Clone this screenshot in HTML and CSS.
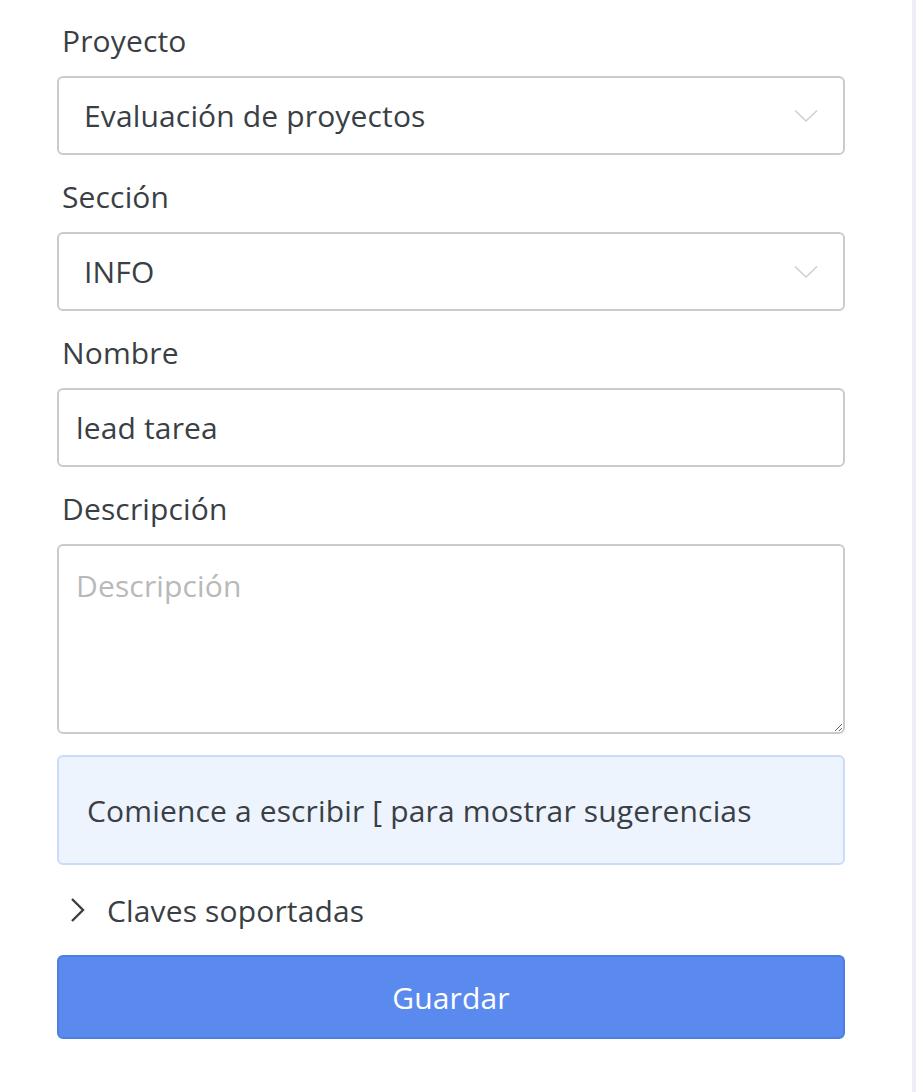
FILE: index.html
```html
<!DOCTYPE html>
<html lang="es">
<head>
<meta charset="utf-8">
<title>Tarea</title>
<link rel="stylesheet" href="styles.css">
</head>
<body>
<div class="page">
  <form class="form">
    <div class="field">
      <label class="label">Proyecto</label>
      <div class="select-wrap">
        <div class="control select">Evaluación de proyectos</div>
        <svg class="chev" width="24" height="14" viewBox="0 0 24 14"><path d="M1 1.5 L12 12 L23 1.5" fill="none" stroke="#cfcfcf" stroke-width="1.6"/></svg>
      </div>
    </div>
    <div class="field">
      <label class="label">Sección</label>
      <div class="select-wrap">
        <div class="control select">INFO</div>
        <svg class="chev" width="24" height="14" viewBox="0 0 24 14"><path d="M1 1.5 L12 12 L23 1.5" fill="none" stroke="#cfcfcf" stroke-width="1.6"/></svg>
      </div>
    </div>
    <div class="field">
      <label class="label">Nombre</label>
      <input class="control input" type="text" value="lead tarea">
    </div>
    <div class="field">
      <label class="label">Descripción</label>
      <textarea class="control textarea" placeholder="Descripción"></textarea>
    </div>
    <div class="info">Comience a escribir [ para mostrar sugerencias</div>
    <div class="keys">
      <svg class="keys-chev" width="16" height="26" viewBox="0 0 16 26"><path d="M2 2 L13 13 L2 24" fill="none" stroke="#3a3f45" stroke-width="2.4"/></svg>
      <span>Claves soportadas</span>
    </div>
    <button class="btn" type="button">Guardar</button>
  </form>
  <div class="scrollbar"></div>
</div>
</body>
</html>
```
FILE: styles.css
```css
html, body {
  margin: 0;
  padding: 0;
  background: #ffffff;
}
body {
  font-family: "Open Sans", "Noto Sans", sans-serif;
  color: #3a3f45;
  letter-spacing: 0.15px;
}
.page {
  display: flex;
  min-height: 1092px;
}
.form {
  width: 788px;
  margin-left: 57px;
  padding-top: 21px;
  display: flex;
  flex-direction: column;
}
.scrollbar {
  margin-left: auto;
  width: 4px;
  background: #efebf7;
}
.field {
  display: flex;
  flex-direction: column;
  margin-bottom: 22px;
}
.label {
  font-size: 30px;
  line-height: 40px;
  margin-bottom: 15px;
  padding-left: 5px;
  color: #3a3f45;
}
.control {
  box-sizing: border-box;
  width: 100%;
  border: 2px solid #cbcbcb;
  border-radius: 6px;
  background: #fff;
  font-family: inherit;
  font-size: 30px;
  letter-spacing: 0.15px;
  color: #3a3f45;
  outline: none;
}
.select-wrap {
  position: relative;
}
.select {
  height: 79px;
  display: flex;
  align-items: center;
  padding-left: 25px;
}
.chev {
  position: absolute;
  right: 27px;
  top: 33px;
}
.input {
  height: 79px;
  padding: 0 17px;
}
.textarea {
  height: 190px;
  padding: 20px 17px;
  resize: vertical;
  display: block;
  margin: 0;
  line-height: 40px;
}
.textarea::placeholder {
  color: #b9b9b9;
}
.info {
  box-sizing: border-box;
  margin-top: -1px;
  height: 110px;
  display: flex;
  align-items: center;
  padding-left: 28px;
  background: #edf4fd;
  border: 2px solid #c9ddf8;
  border-radius: 6px;
  font-size: 30px;
}
.keys {
  display: flex;
  align-items: center;
  height: 90px;
  padding-left: 13px;
  font-size: 30px;
}
.keys-chev {
  margin-right: 21px;
}
.btn {
  box-sizing: border-box;
  height: 84px;
  width: 100%;
  background: #5b8aee;
  border: 2px solid #4f7ee2;
  border-radius: 6px;
  color: #ffffff;
  font-family: inherit;
  font-size: 30px;
  letter-spacing: 0.15px;
}
```
